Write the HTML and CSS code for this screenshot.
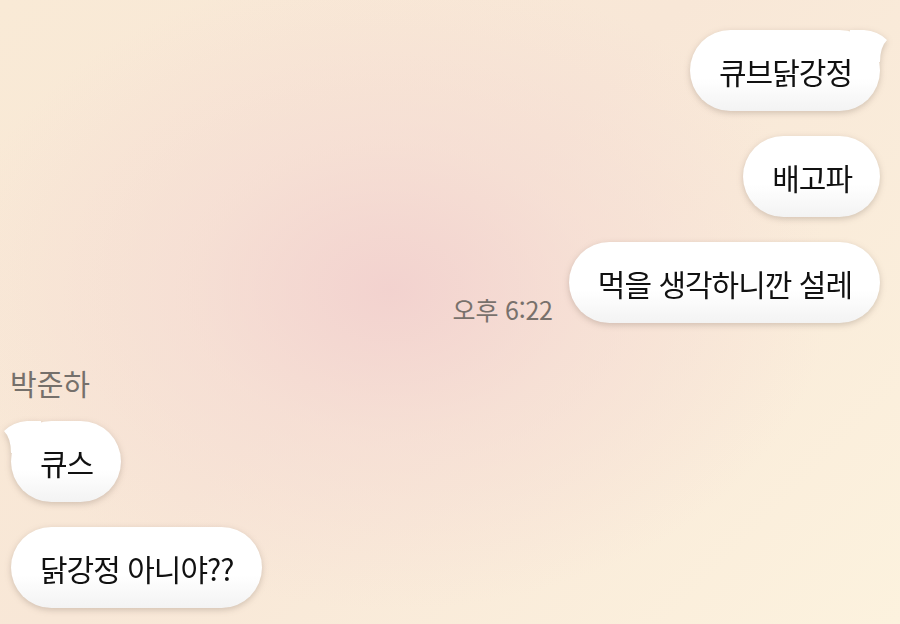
FILE: index.html
```html
<!DOCTYPE html>
<html lang="ko">
<head>
    <meta charset="UTF-8">
    <meta name="viewport" content="width=device-width, initial-scale=1.0">
    <title>채팅</title>
    <link rel="stylesheet" href="styles.css">
</head>
<body>
    <div class="chat">
        <div class="row me">
            <div class="bubble tail-right">큐브닭강정</div>
        </div>
        <div class="row me">
            <div class="bubble">배고파</div>
        </div>
        <div class="row me">
            <span class="time">오후 6:22</span>
            <div class="bubble">먹을 생각하니깐 설레</div>
        </div>

        <div class="sender">박준하</div>
        <div class="row you">
            <div class="bubble tail-left">큐스</div>
        </div>
        <div class="row you">
            <div class="bubble">닭강정 아니야??</div>
        </div>
    </div>
</body>
</html>
```

FILE: styles.css
```css
* {
    margin: 0;
    padding: 0;
    box-sizing: border-box;
}

html, body {
    height: 100%;
}

body {
    font-family: "Noto Sans CJK KR", "Noto Sans", sans-serif;
    background-color: #faeed9;
    background-image:
        radial-gradient(ellipse 440px 320px at 390px 290px, rgba(242, 208, 206, 0.9) 0%, rgba(244, 216, 210, 0.55) 45%, rgba(247, 230, 215, 0) 100%),
        linear-gradient(135deg, #f9ead6 0%, #f8e7d7 45%, #fcf2de 100%);
    overflow: hidden;
}

.chat {
    display: flex;
    flex-direction: column;
    gap: 25px;
    padding: 30px 20px 0 11px;
}

.row {
    display: flex;
    align-items: flex-end;
}

.row.me {
    justify-content: flex-end;
}

.bubble {
    position: relative;
    height: 81px;
    padding: 0 28px 0 29px;
    border-radius: 41px;
    display: flex;
    align-items: center;
    font-size: 30px;
    letter-spacing: -1px;
    color: #111;
    background: linear-gradient(#ffffff 0%, #ffffff 60%, #f3f3f3 100%);
    filter: drop-shadow(0 2px 3px rgba(90, 70, 60, 0.25));
    white-space: nowrap;
}

.tail-right::after,
.tail-left::after {
    content: "";
    position: absolute;
    top: 0;
    width: 38px;
    height: 32px;
    background: #fff;
}

.tail-right::after {
    right: -8px;
    clip-path: path("M0 0 L14 0 Q28 1 37 10 Q30 17 30 32 L0 32 Z");
}

.tail-left::after {
    left: -8px;
    clip-path: path("M38 0 L24 0 Q10 1 1 10 Q8 17 8 32 L38 32 Z");
}

.time {
    font-size: 25px;
    color: #78716c;
    line-height: 1;
    margin: 0 16px 1px 0;
    letter-spacing: -0.2px;
}

.sender {
    font-size: 29px;
    line-height: 33px;
    color: #75706b;
    margin: 19px 0 -4px -1px;
}
```
